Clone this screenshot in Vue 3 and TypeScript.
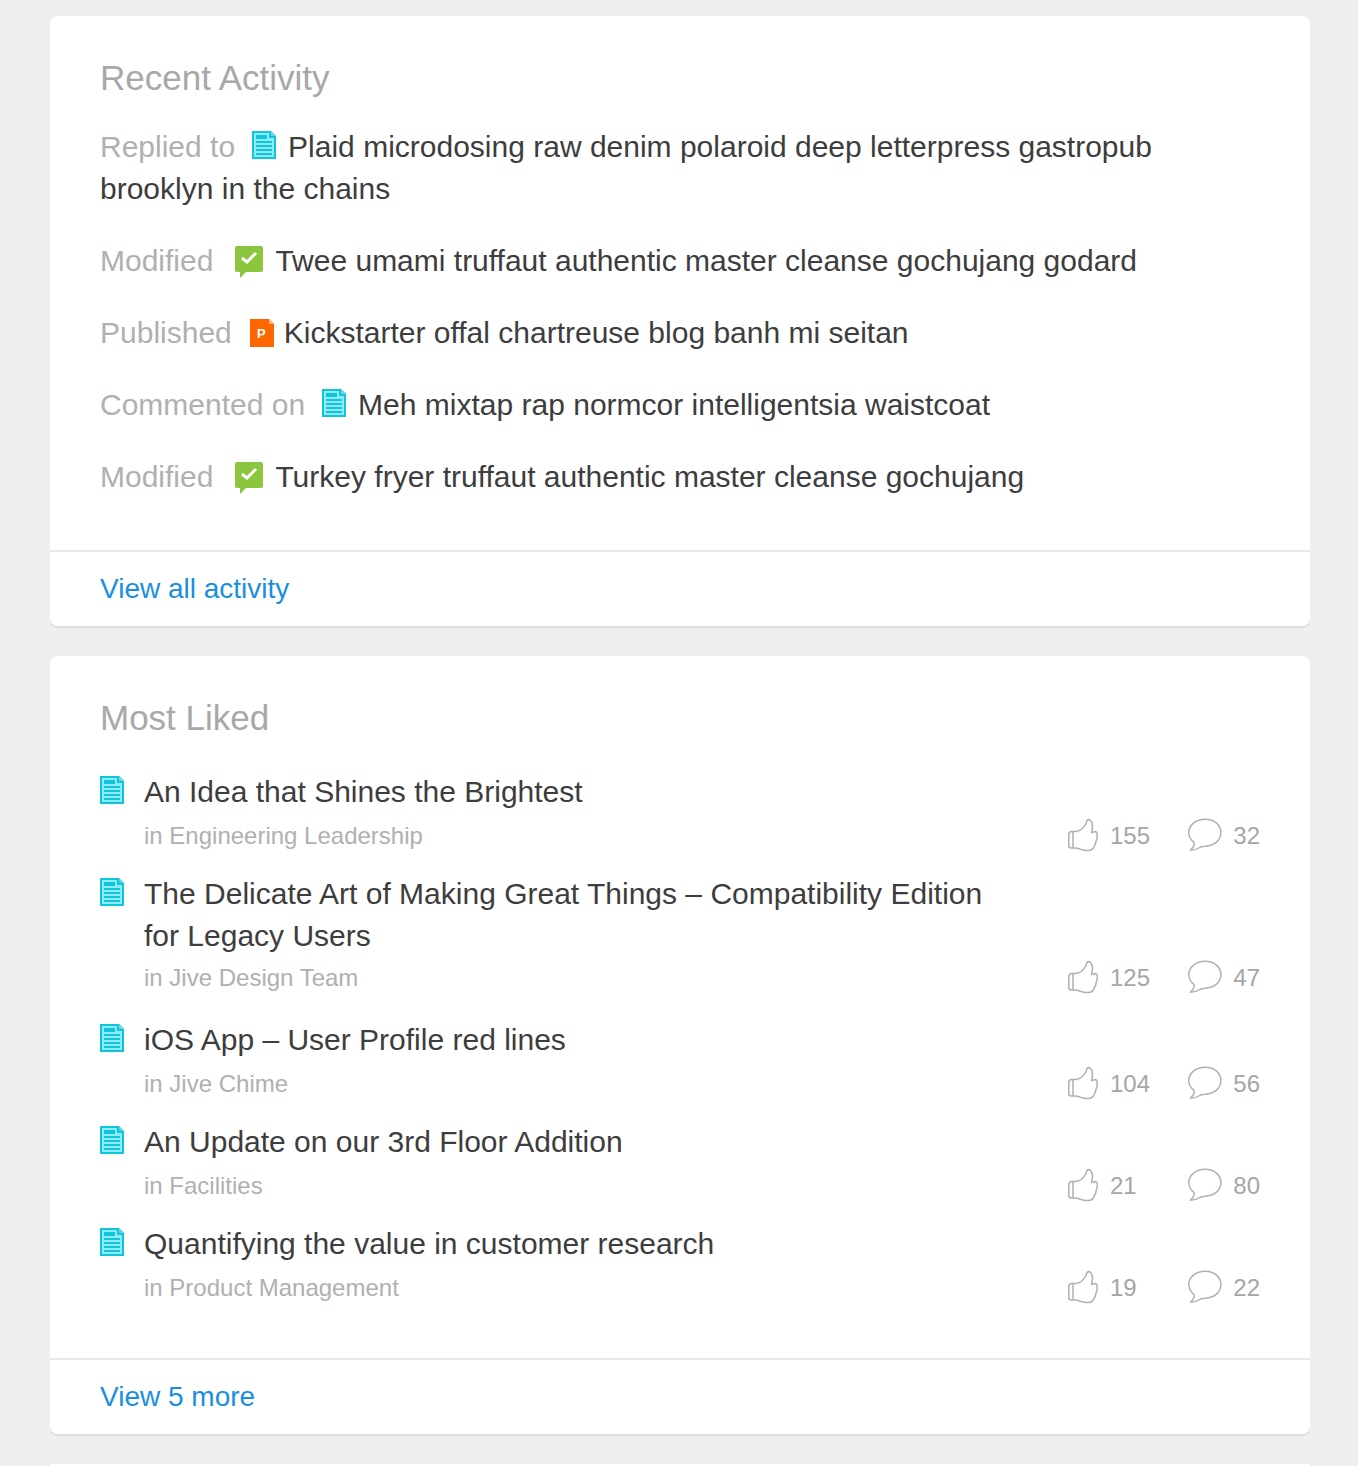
<script setup lang="ts">
type IconKind = 'doc' | 'task' | 'slides'

interface Activity {
  action: string
  icon: IconKind
  title: string
}

interface LikedItem {
  title: string
  place: string
  likes: number
  comments: number
  long?: boolean
}

const activities: Activity[] = [
  { action: 'Replied to', icon: 'doc', title: 'Plaid microdosing raw denim polaroid deep letterpress gastropub brooklyn in the chains' },
  { action: 'Modified', icon: 'task', title: 'Twee umami truffaut authentic master cleanse gochujang godard' },
  { action: 'Published', icon: 'slides', title: 'Kickstarter offal chartreuse blog banh mi seitan' },
  { action: 'Commented on', icon: 'doc', title: 'Meh mixtap rap normcor intelligentsia waistcoat' },
  { action: 'Modified', icon: 'task', title: 'Turkey fryer truffaut authentic master cleanse gochujang' },
]

const liked: LikedItem[] = [
  { title: 'An Idea that Shines the Brightest', place: 'Engineering Leadership', likes: 155, comments: 32 },
  { title: 'The Delicate Art of Making Great Things – Compatibility Edition for Legacy Users', place: 'Jive Design Team', likes: 125, comments: 47, long: true },
  { title: 'iOS App – User Profile red lines', place: 'Jive Chime', likes: 104, comments: 56 },
  { title: 'An Update on our 3rd Floor Addition', place: 'Facilities', likes: 21, comments: 80 },
  { title: 'Quantifying the value in customer research', place: 'Product Management', likes: 19, comments: 22 },
]
</script>

<template>
  <main class="page">
    <section class="card">
      <div class="body">
        <h2 class="heading">Recent Activity</h2>
        <ul class="activity">
          <li v-for="(a, i) in activities" :key="i">
            <span class="action">{{ a.action }}</span>
            <svg v-if="a.icon === 'doc'" class="icon doc" viewBox="0 0 24 28" aria-hidden="true">
              <path d="M0 0h19l5 5v23H0z" fill="#10c4da" />
              <path d="M2 2h15v5h5v19H2z" fill="#8eeaf5" />
              <path d="M19 0l5 5h-5z" fill="#5fd9e8" />
              <path d="M4 4h11v4H4zM4 10h16v2H4zM4 14h16v2H4zM4 18h16v2H4zM4 22h16v2H4z" fill="#10c4da" />
            </svg>
            <svg v-else-if="a.icon === 'task'" class="icon task" viewBox="0 0 28 32" aria-hidden="true">
              <path d="M2 0h24q2 0 2 2v22q0 2-2 2H11l-6 6v-6H2q-2 0-2-2V2q0-2 2-2z" fill="#8cc63f" />
              <path d="M7 12l5 4 9-9" fill="none" stroke="#fff" stroke-width="3" />
            </svg>
            <svg v-else class="icon slides" viewBox="0 0 24 28" aria-hidden="true">
              <path d="M0 0h19l5 5v23H0z" fill="#ff6600" />
              <path d="M19 0l5 5h-5z" fill="#ffb27d" />
              <text x="7" y="19" class="letter">P</text>
            </svg>
            <span class="title">{{ a.title }}</span>
          </li>
        </ul>
      </div>
      <footer class="foot"><a href="#">View all activity</a></footer>
    </section>

    <section class="card">
      <div class="body">
        <h2 class="heading">Most Liked</h2>
        <ul class="liked">
          <li v-for="item in liked" :key="item.title" :class="{ long: item.long }">
            <svg class="doc-mark" viewBox="0 0 24 28" aria-hidden="true">
              <path d="M0 0h19l5 5v23H0z" fill="#10c4da" />
              <path d="M2 2h15v5h5v19H2z" fill="#8eeaf5" />
              <path d="M19 0l5 5h-5z" fill="#5fd9e8" />
              <path d="M4 4h11v4H4zM4 10h16v2H4zM4 14h16v2H4zM4 18h16v2H4zM4 22h16v2H4z" fill="#10c4da" />
            </svg>
            <div class="info">
              <div class="title">{{ item.title }}</div>
              <div class="place">in {{ item.place }}</div>
            </div>
            <div class="stats">
              <span class="stat">
                <svg class="thumb" viewBox="0 0 32 34" role="img" aria-label="Likes">
                  <path d="M8 13.500C12 13 16 9.500 18 5.500L19 2.500Q20.500 .800 22.500 2.500Q26 6 23.500 14.500L27.500 13.500Q30 14.500 29 18Q29.500 20.500 28 23Q28 25.500 26.500 27.500Q25 32.500 20 32.500Q16 33 10 30.500L8 30M8 13.500H3.500Q.800 13.500 .800 17V27.500Q.800 30 3.500 30H8M5 14V30" />
                </svg>
                {{ item.likes }}
              </span>
              <span class="stat">
                <svg class="bubble" viewBox="0 0 36 34" role="img" aria-label="Comments">
                  <path d="M17.500 1C27 1 33.500 7 33.500 14.500C33.500 22.500 27 28 17.500 28.500Q14.500 28.500 12.500 29.500Q8 32.500 2.500 32.500Q5.500 30 6.500 26.500L6 24.500Q.800 20.500 .800 14.500C.800 7 8 1 17.500 1Z" />
                </svg>
                {{ item.comments }}
              </span>
            </div>
          </li>
        </ul>
      </div>
      <footer class="foot"><a href="#">View 5 more</a></footer>
    </section>

    <section class="card next"></section>
  </main>
</template>

<style>
body {
  margin: 0;
  background: #efefef;
}
</style>

<style scoped>
.page {
  display: flex;
  flex-direction: column;
  gap: 30px;
  padding: 16px 48px 0 50px;
  font-family: "Liberation Sans", Arial, sans-serif;
  font-size: 30px;
  line-height: 42px;
  color: #3d3d3d;
}
.card {
  background: #fff;
  border-radius: 8px;
  box-shadow: 0 2px 1px #dedede;
}
.next {
  height: 2px;
  border-radius: 8px 8px 0 0;
  box-shadow: none;
}
.body {
  padding: 40px 50px 52px;
}
.heading {
  margin: 0;
  font-size: 35px;
  font-weight: 300;
  line-height: 44px;
  color: #a8a8a8;
}
ul {
  list-style: none;
  margin: 0;
  padding: 0;
}
.activity {
  display: flex;
  flex-direction: column;
  gap: 30px;
  padding-top: 26px;
}
.action {
  color: #b0b0b0;
}
.icon {
  height: 28px;
  vertical-align: -2px;
}
.doc {
  width: 24px;
  margin: 0 12px 0 17px;
}
.task {
  width: 28px;
  height: 32px;
  margin: 0 12px 0 22px;
  vertical-align: -7px;
}
.slides {
  width: 24px;
  margin: 0 10px 0 18px;
  vertical-align: -4px;
}
.letter {
  font-size: 13px;
  font-weight: 700;
  fill: #fff;
}
.liked {
  display: flex;
  flex-direction: column;
  gap: 16px;
  padding-top: 31px;
}
.liked li {
  display: flex;
  align-items: flex-end;
}
.liked li:last-child {
  margin-bottom: -3px;
}
.doc-mark {
  align-self: flex-start;
  flex: none;
  width: 24px;
  height: 28px;
  margin: 5px 20px 0 0;
}
.info {
  flex: 1;
}
.place {
  margin-top: 2px;
  font-size: 24px;
  color: #b0b0b0;
}
.long {
  padding-bottom: 4px;
}
.long .place {
  margin-top: 0;
}
.stats {
  display: grid;
  grid-template-columns: 120px 72px;
  margin-left: 56px;
  font-size: 24px;
  color: #a6a6a6;
}
.stat {
  display: flex;
  align-items: center;
  gap: 10px;
}
.stat svg {
  height: 34px;
  margin-bottom: 2px;
  fill: none;
  stroke: #b0b0b0;
  stroke-width: 1.500;
  stroke-linejoin: round;
}
.thumb {
  width: 32px;
}
.bubble {
  width: 36px;
}
.foot {
  padding: 16px 50px;
  border-top: 2px solid #e8e8e8;
  font-size: 28px;
}
.foot a {
  color: #1a8fe0;
  text-decoration: none;
}
</style>
